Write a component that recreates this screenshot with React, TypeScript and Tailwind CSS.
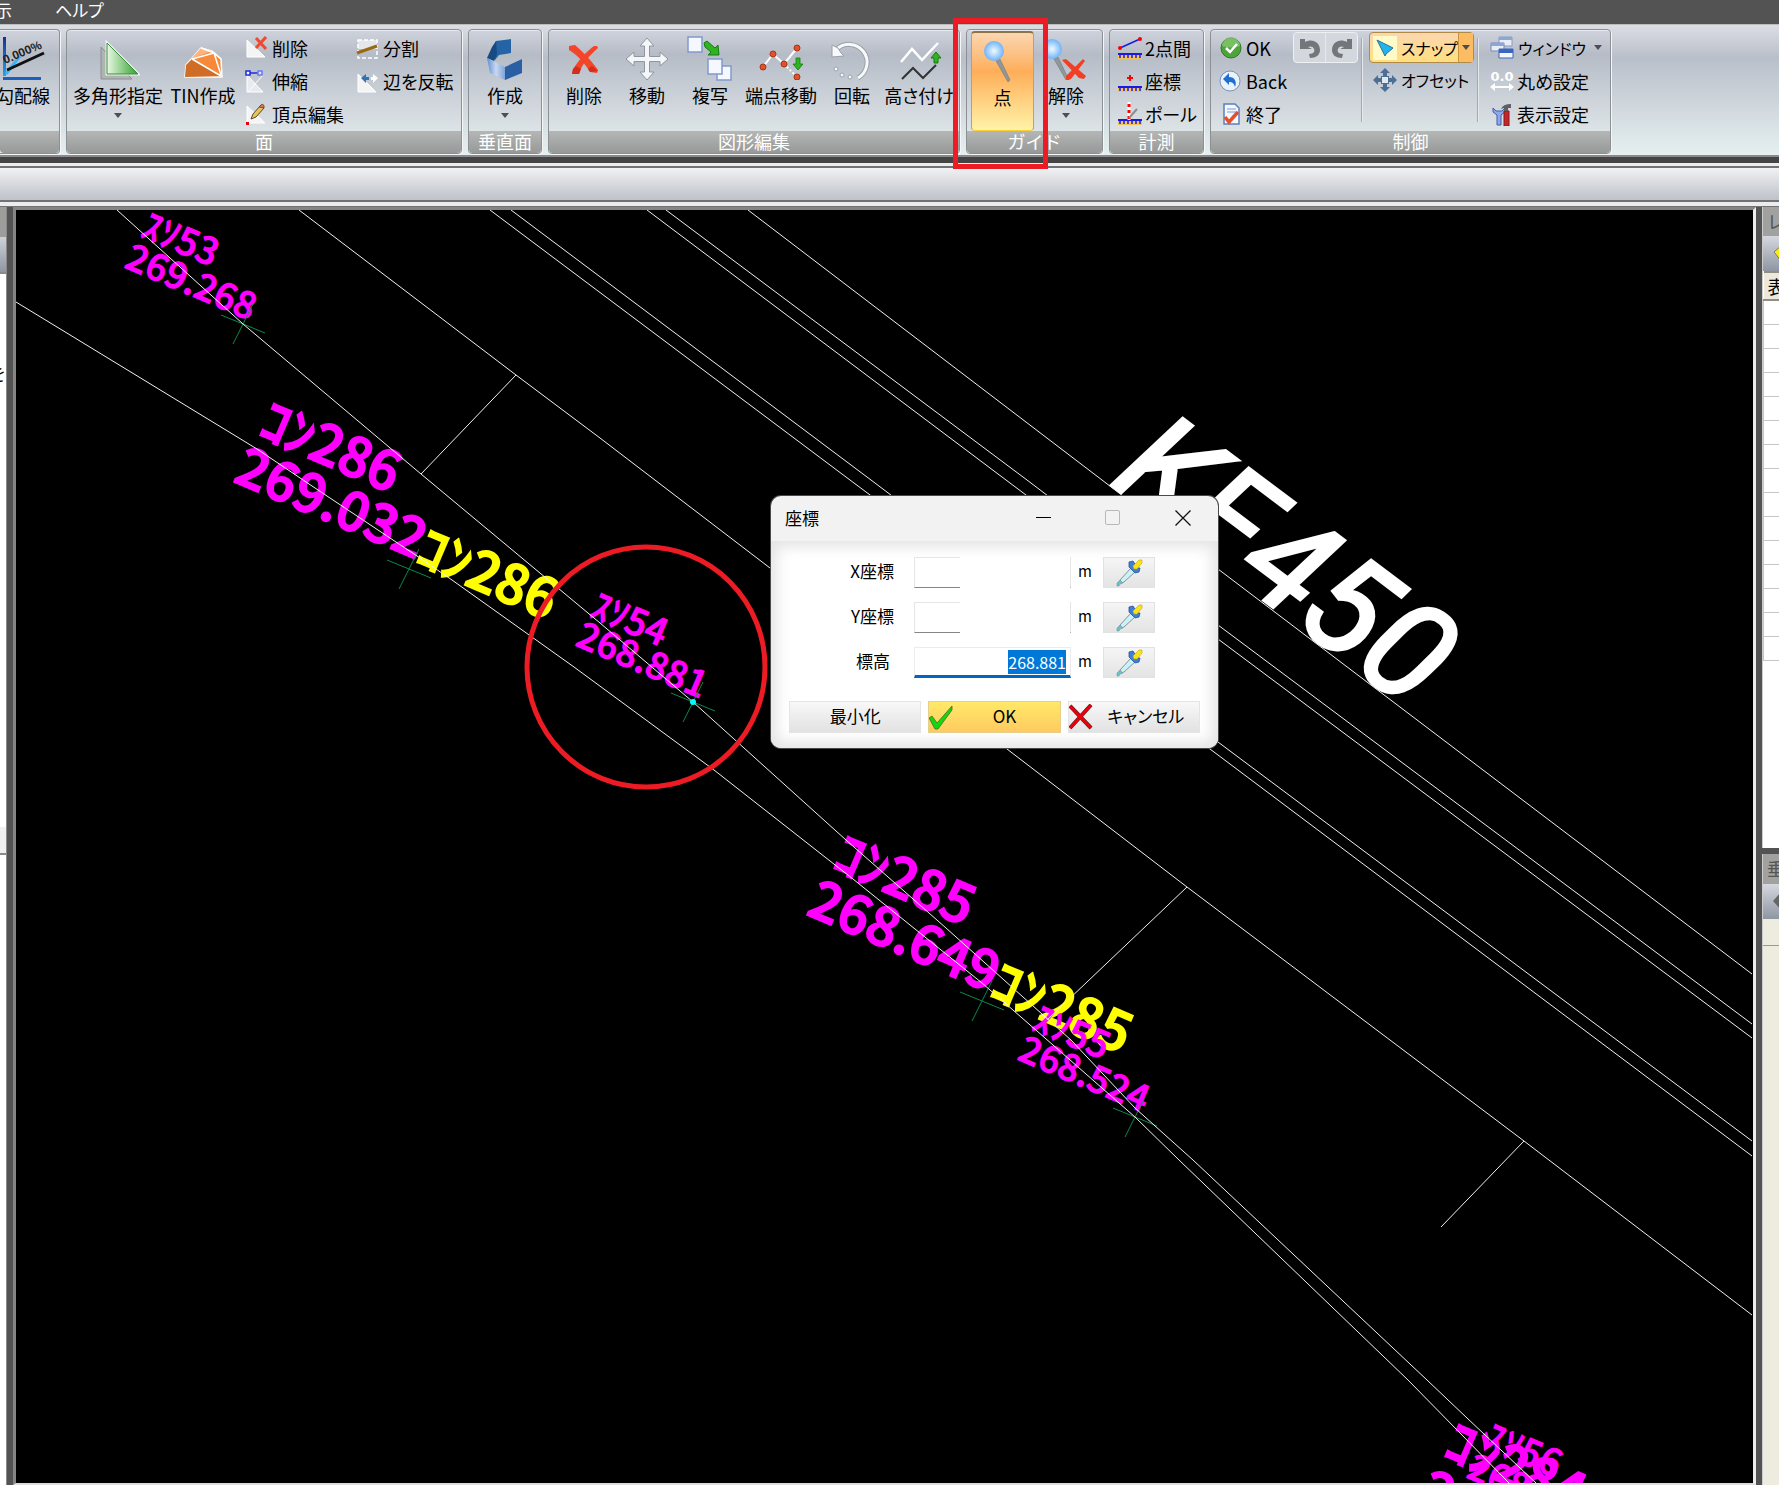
import { useEffect, useRef } from "react";
import type { ReactNode } from "react";

/* ---------- 大アイコン (44x44) ---------- */

const SlopeIcon = () => (
  <svg width="46" height="44" viewBox="0 0 46 44">
    <defs>
      <linearGradient id="axis" x1="0" y1="0" x2="0" y2="1">
        <stop offset="0" stopColor="#1b2f8f" />
        <stop offset="1" stopColor="#1fa3ee" />
      </linearGradient>
    </defs>
    <path d="M3 1h3v39H3z" fill="url(#axis)" />
    <path d="M3 41h38v3H3z" fill="#1d5fc0" />
    <path d="M6 38L20 20" stroke="#38b6f5" strokeWidth="3" />
    <path d="M7 34L44 17" stroke="#111" strokeWidth="3" />
    <text x="5" y="28" fontSize="12" fontWeight="bold" fill="#222" transform="rotate(-23 5 28)" fontFamily="Liberation Sans, sans-serif">0.000%</text>
  </svg>
);

const PolygonIcon = () => (
  <svg width="44" height="44" viewBox="0 0 44 44">
    <defs>
      <linearGradient id="tri" x1="0" y1="0" x2="1" y2="0">
        <stop offset="0" stopColor="#e9f8e4" />
        <stop offset="1" stopColor="#2fa32b" />
      </linearGradient>
    </defs>
    <path d="M5 11L36 43H5z" fill="#b0b3b3" stroke="#8b8f8f" />
    <path d="M11 7L42 38H11z" fill="url(#tri)" stroke="#eef6ee" strokeWidth="3" />
    <path d="M11 7L42 38H11z" fill="url(#tri)" stroke="#3d8a3a" strokeWidth="1" />
  </svg>
);

const TinIcon = () => (
  <svg width="44" height="44" viewBox="0 0 44 44">
    <path d="M4 41L5 29L20 12L31 15L40 23L41 41z" fill="#f6893a" stroke="#fff" strokeWidth="1.500" strokeLinejoin="round" />
    <path d="M4 41L5 29L11 23L40 40z" fill="#cf6c25" />
    <path d="M10 23L20 12L31 15z" fill="#ffb27a" />
    <path d="M11 23L40 40M11 23L33 17L40 39M20 12L33 17L40 23" fill="none" stroke="#fff" strokeWidth="1.500" />
  </svg>
);

const PlaneIcon = () => (
  <svg width="44" height="44" viewBox="0 0 44 44">
    <defs>
      <linearGradient id="pl" x1="0" y1="0" x2="1" y2="0">
        <stop offset="0" stopColor="#5f8fd0" />
        <stop offset="0.500" stopColor="#c8d8f2" />
        <stop offset="1" stopColor="#7fa3d8" />
      </linearGradient>
    </defs>
    <path d="M13 5L28 3V17L16 19L12 24L9 22z" fill="#2463a5" />
    <path d="M13 5L9 11L4 22L11 25L14 18z" fill="#174a80" />
    <path d="M4 22L22 31V44L7 37z" fill="url(#pl)" />
    <path d="M22 31L39 23V37L22 44z" fill="#2a60a3" />
  </svg>
);

const DeleteIcon = () => (
  <svg width="44" height="44" viewBox="0 0 44 44">
    <path d="M7 10L13 9C20 15 29 24 36 34L35 37L28 36C22 26 14 18 7 14z" fill="#f2452a" />
    <path d="M35 10L36 12C27 20 20 28 17 38L10 38L11 33C17 24 25 15 32 10z" fill="#f2452a" />
    <path d="M10 38L11 33L14 30L19 33L17 38zM28 36L26 33L30 30L36 35z" fill="#d32e1a" />
  </svg>
);

const MoveIcon = () => (
  <svg width="44" height="44" viewBox="0 0 44 44">
    <path
      d="M22 2L29 10H24.500V20.500H35V16L43 23L35 30V25.500H24.500V36H29L22 44L15 36H19.500V25.500H9V30L1 23L9 16V20.500H19.500V10H15z"
      fill="#f4f6f9" stroke="#8e969e" strokeWidth="1"
    />
  </svg>
);

const CopyIcon = () => (
  <svg width="46" height="46" viewBox="0 0 46 46">
    <path d="M30 31h14v14H30z" fill="#f5f8ff" stroke="#8199cc" strokeWidth="1.500" />
    <path d="M1 2h14v15H1z" fill="#f5f8ff" stroke="#8199cc" strokeWidth="1.500" />
    <path d="M21 24h14v15H21z" fill="#f5f8ff" stroke="#8199cc" strokeWidth="1.500" />
    <path d="M17 8L20 6L28 13L31 10L32 20L21 20L24 17L18 12z" fill="#2eb321" stroke="#167a10" />
  </svg>
);

const EndMoveIcon = () => (
  <svg width="44" height="44" viewBox="0 0 44 44">
    <path d="M4 31L14 18L25 28L38 12" fill="none" stroke="#fff" strokeWidth="2" />
    <path d="M25 28L38 41" stroke="#fff" strokeWidth="2" strokeDasharray="2 2" />
    {[[4, 31], [14, 18], [25, 28], [38, 12], [38, 41]].map(([x, y]) => (
      <circle key={`${x}-${y}`} cx={x} cy={y} r="3" fill="#e2512c" stroke="#a63417" />
    ))}
    <path d="M38 22h3v6h3l-5 6l-5-6h3v-6z" fill="#2eb321" stroke="#167a10" strokeWidth="0.800" />
  </svg>
);

const RotateIcon = () => (
  <svg width="44" height="44" viewBox="0 0 44 44">
    <path d="M6 14A18 18 0 1 1 28 42" fill="none" stroke="#9aa1a8" strokeWidth="5" />
    <path d="M6 14A18 18 0 1 1 28 42" fill="none" stroke="#f7f9fb" strokeWidth="3" />
    <path d="M2 9L2 21L14 20L11 17L8 12z" fill="#f7f9fb" stroke="#9aa1a8" />
    <circle cx="6" cy="33" r="2" fill="#f7f9fb" stroke="#9aa1a8" />
    <circle cx="12" cy="39" r="2" fill="#f7f9fb" stroke="#9aa1a8" />
    <circle cx="20" cy="41" r="2" fill="#f7f9fb" stroke="#9aa1a8" />
  </svg>
);

const HeightIcon = () => (
  <svg width="44" height="44" viewBox="0 0 44 44">
    <path d="M4 26L15 13L25 24L41 7" fill="none" stroke="#fff" strokeWidth="2.500" />
    <path d="M5 43L16 32L26 42L39 29" fill="none" stroke="#333" strokeWidth="2" />
    <path d="M39 16l5 6h-3v5h-4v-5h-3z" fill="#2eb321" stroke="#167a10" />
  </svg>
);

const PinHead = ({ id }: { id: string }) => (
  <>
    <defs>
      <radialGradient id={id}>
        <stop offset="0" stopColor="#f2faff" />
        <stop offset="1" stopColor="#6db4fb" />
      </radialGradient>
    </defs>
    <path d="M15 23L19 21L29 42L27 44z" fill="#8f979b" stroke="#6b7275" strokeWidth="0.500" />
    <circle cx="13" cy="13" r="10" fill={`url(#${id})`} />
  </>
);

const PinIcon = () => (
  <svg width="44" height="44" viewBox="0 0 44 44">
    <PinHead id="pinA" />
  </svg>
);

const ReleaseIcon = () => (
  <svg width="44" height="44" viewBox="0 0 44 44">
    <g transform="translate(-5 0)"><PinHead id="pinB" /></g>
    <path d="M18 24L22 23L42 40L40 43L35 42z" fill="#ef4026" />
    <path d="M39 23L41 25L27 43L22 45L22 40z" fill="#ef4026" />
  </svg>
);

/* ---------- 小アイコン (24x24) ---------- */

const Small = ({ children }: { children: ReactNode }) => (
  <svg width="24" height="24" viewBox="0 0 24 24" className="shrink-0">{children}</svg>
);

const faceDelete = (
  <Small>
    <path d="M2 4V21H20z" fill="#f4f4f4" stroke="#fff" />
    <path d="M11 2L21 13M21 1L11 12" stroke="#ef4a30" strokeWidth="3" />
  </Small>
);
const faceStretch = (
  <Small>
    <path d="M2 6L18 23H2z" fill="#e8eaee" stroke="#fff" />
    <path d="M18 6L3 23" stroke="#fff" />
    <path d="M4 4H15" stroke="#1b2be0" strokeWidth="1.500" />
    <path d="M1 2h4v4H1z" fill="#fff" stroke="#1b2be0" strokeWidth="1.500" />
    <path d="M13 2h4v4h-4z" fill="#dfe4ff" stroke="#6b78ee" strokeWidth="1.500" />
  </Small>
);
const faceVertex = (
  <Small>
    <path d="M2 4V21H20z" fill="#f4f4f4" stroke="#fff" />
    <path d="M6 17L8 12L16 3L19 6L11 15z" fill="#e8c25a" stroke="#5a4a2a" />
    <path d="M14 5L17 2Q20 3 19 6z" fill="#d8705a" stroke="#5a4a2a" strokeWidth="0.800" />
    <path d="M1 20h3v3H1z" fill="#e60012" />
  </Small>
);
const faceSplit = (
  <Small>
    <path d="M2 4h19v9H2z" fill="#e4e6ea" />
    <path d="M2 4h19v18H2z" fill="none" stroke="#fff" strokeDasharray="4 2" strokeWidth="1.500" />
    <path d="M1 17L21 10" stroke="#9a6a12" strokeWidth="3" />
  </Small>
);
const faceFlip = (
  <Small>
    <path d="M2 5V23H20z" fill="#f4f4f4" stroke="#fff" />
    <path d="M5 9L10 5V8H13V11H10V14z" fill="#2f75b5" />
    <path d="M22 9L17 5V8H15V11H17V14z" fill="#fff" />
  </Small>
);

const Ruler = () => (
  <>
    <path d="M0 18h24v5H0z" fill="#f3c35c" />
    <path d="M0 18h24" stroke="#1b1be0" strokeWidth="2" />
    <path d="M2 18v4M6 18v4M10 18v4M14 18v4M18 18v4M22 18v4" stroke="#1b1be0" strokeWidth="1.500" />
  </>
);
const twoPoint = (
  <Small>
    <Ruler />
    <path d="M2 12L22 3" stroke="#1b1be0" strokeWidth="1.500" />
    <circle cx="2" cy="12" r="2" fill="#f00" />
    <circle cx="22" cy="3" r="2" fill="#f00" />
  </Small>
);
const coordPoint = (
  <Small>
    <Ruler />
    <path d="M11 6h2v2h2v2h-2v2h-2v-2h-2v-2h2z" fill="#f00" />
  </Small>
);
const pole = (
  <Small>
    <Ruler />
    <path d="M11 0V18" stroke="#fff" strokeWidth="3" />
    <path d="M11 2V18" stroke="#f00" strokeWidth="3" strokeDasharray="3 3" />
    <path d="M11 16L19 7" stroke="#8c8f8c" strokeWidth="2" />
  </Small>
);

const okIcon = (
  <Small>
    <circle cx="12" cy="12" r="10" fill="#4fa33b" stroke="#2f7a22" />
    <path d="M3 10A9 9 0 0 1 21 10Q12 13 3 10z" fill="#8bcb78" opacity="0.700" />
    <path d="M7 12L11 16L18 8" fill="none" stroke="#fff" strokeWidth="2.500" />
  </Small>
);
const backIcon = (
  <Small>
    <circle cx="11" cy="12" r="10" fill="#e9f1fb" stroke="#7c93b5" />
    <path d="M4 10L10 4V8C16 8 18 13 16 18C15 14 13 13 10 13V16z" fill="#1f6fd0" />
  </Small>
);
const exitIcon = (
  <Small>
    <path d="M5 2h11l4 4v16H5z" fill="#f4f8ff" stroke="#5a7fc0" strokeWidth="1.500" />
    <path d="M8 7h9M8 10h9" stroke="#7f9bd0" />
    <path d="M6 15L10 20L19 10" fill="none" stroke="#e2512c" strokeWidth="3.500" />
  </Small>
);
const snapIcon = (
  <Small>
    <path d="M0 0h24v24H0z" fill="#fffbc9" />
    <path d="M4 4L20 12L13 18L12 20z" fill="#1fb6ee" stroke="#2c6f95" />
  </Small>
);
const offsetIcon = (
  <Small>
    <path
      d="M12 0L17 5H14V8H16V10H19V7L24 12L19 17V14H16V16H14V19H17L12 24L7 19H10V16H8V14H5V17L0 12L5 7V10H8V8H10V5H7z"
      fill="#4d6f96"
    />
    <path d="M9 9h6v6H9z" fill="#e3e8ee" />
  </Small>
);
const windowIcon = (
  <Small>
    <path d="M9 1h13v9H9z" fill="#e7ecf5" stroke="#8a9cc0" />
    <path d="M1 7h13v8H1z" fill="#e7ecf5" stroke="#6f88bb" />
    <path d="M1 7h13v3H1zM9 1h13v3H9z" fill="#8ea6d4" />
    <path d="M9 13h14v9H9z" fill="#f2f6fd" stroke="#3a66c0" />
    <path d="M9 13h14v4H9z" fill="#3a66c0" />
  </Small>
);
const roundIcon = (
  <Small>
    <text x="12" y="12" fontSize="13" fontWeight="bold" textAnchor="middle" fill="#fff" fontFamily="DejaVu Sans, sans-serif">0.0</text>
    <path d="M0 18L5 14V17H19V14L24 18L19 22V19H5V22z" fill="#fff" />
  </Small>
);
const displayIcon = (
  <Small>
    <path d="M3 6V10L7 13V23H11V13L15 10V6L12 9H6z" fill="#8fa9e8" stroke="#3f5fb0" />
    <path d="M14 9h5v15h-5z" fill="#c3272b" stroke="#8e1518" />
    <path d="M11 7Q13 2 21 2V6H18V9H14V6z" fill="#5b6166" />
  </Small>
);

const Arrow = () => (
  <svg width="8" height="5" viewBox="0 0 8 5" className="shrink-0"><path d="M0 0h8L4 5z" fill="#4b4f55" /></svg>
);

/* ---------- リボン部品 ---------- */

function Group({ title, className, children }: { title: string; className: string; children: ReactNode }) {
  return (
    <section
      className={`relative flex h-[125px] shrink-0 flex-col rounded border border-[#8c9094] bg-linear-to-b from-[#cfd3dc] via-[#b6bcc7] via-20% to-[#e8efef] shadow-[1px_1px_0_#f4f6f8,inset_0_1px_0_#e6e9ee] ${className}`}
    >
      <div className="flex flex-1 px-1">{children}</div>
      <h2 className="h-[22px] rounded-b bg-linear-to-b from-[#b4b7b6] to-[#969998] text-center text-[18px] leading-5 text-white">
        {title}
      </h2>
    </section>
  );
}

function BigButton({ icon, label, className, arrow, active }: { icon: ReactNode; label: string; className: string; arrow?: boolean; active?: boolean }) {
  return (
    <button
      type="button"
      className={`mt-px flex h-[100px] shrink-0 flex-col items-center rounded-sm pt-1 ${className} ${
        active
          ? "border border-t-2 border-[#c8a050] border-t-[#8b7448] border-b-[#fbd033] bg-linear-to-b from-[#fbd6b0] via-[#fdae58] via-40% to-[#fff3a8]"
          : ""
      }`}
    >
      <span className="flex h-[46px] items-center">{icon}</span>
      <span className="mt-[2px] whitespace-nowrap text-[18px] leading-6 [font-feature-settings:'palt']">{label}</span>
      {arrow && <span className="flex h-4 items-center"><Arrow /></span>}
    </button>
  );
}

function Row({ icon, label, arrow }: { icon: ReactNode; label: string; arrow?: boolean }) {
  return (
    <button type="button" className="flex h-[33px] items-center gap-[3px] whitespace-nowrap text-[18px] leading-6">
      {icon}
      <span className="[font-feature-settings:'palt']">{label}</span>
      {arrow && <span className="pl-1"><Arrow /></span>}
    </button>
  );
}

const Separator = () => <div className="mt-2 h-[84px] w-[2px] border-r border-[#e6e9ec] bg-[#a4a8b0]" />;

function Ribbon() {
  return (
    <div className="flex h-[133px] shrink-0 items-start gap-[6px] overflow-hidden border-b-2 border-t border-b-[#8a8a8a] border-t-[#bbb] bg-linear-to-b from-[#dcdee4] via-[#b9bfca] via-25% to-[#e6f0f0] pt-1">
      <Group title="" className="w-[60px] rounded-l-none border-l-0">
        <BigButton icon={<SlopeIcon />} label="勾配線" className="-ml-[9px] w-[56px]" />
      </Group>
      <Group title="面" className="w-[396px]">
        <BigButton icon={<PolygonIcon />} label="多角形指定" className="w-[94px]" arrow />
        <BigButton icon={<TinIcon />} label="TIN作成" className="w-[76px]" />
        <div className="flex w-[112px] flex-col pl-1 pt-px">
          <Row icon={faceDelete} label="削除" />
          <Row icon={faceStretch} label="伸縮" />
          <Row icon={faceVertex} label="頂点編集" />
        </div>
        <div className="flex flex-col pl-[3px] pt-px">
          <Row icon={faceSplit} label="分割" />
          <Row icon={faceFlip} label="辺を反転" />
        </div>
      </Group>
      <Group title="垂直面" className="w-[74px]">
        <BigButton icon={<PlaneIcon />} label="作成" className="w-[64px]" arrow />
      </Group>
      <Group title="図形編集" className="w-[412px]">
        <BigButton icon={<DeleteIcon />} label="削除" className="w-[62px]" />
        <BigButton icon={<MoveIcon />} label="移動" className="w-[64px]" />
        <BigButton icon={<CopyIcon />} label="複写" className="w-[62px]" />
        <BigButton icon={<EndMoveIcon />} label="端点移動" className="w-[80px]" />
        <BigButton icon={<RotateIcon />} label="回転" className="w-[62px]" />
        <BigButton icon={<HeightIcon />} label="高さ付け" className="w-[72px]" />
      </Group>
      <Group title="ガイド" className="w-[137px]">
        <BigButton icon={<PinIcon />} label="点" className="w-[63px]" active />
        <BigButton icon={<ReleaseIcon />} label="解除" className="w-[64px]" arrow />
      </Group>
      <Group title="計測" className="w-[95px]">
        <div className="flex flex-col pl-1 pt-px">
          <Row icon={twoPoint} label="2点間" />
          <Row icon={coordPoint} label="座標" />
          <Row icon={pole} label="ポール" />
        </div>
      </Group>
      <Group title="制御" className="w-[401px]">
        <div className="flex w-[78px] flex-col pl-1 pt-px">
          <Row icon={okIcon} label="OK" />
          <Row icon={backIcon} label="Back" />
          <Row icon={exitIcon} label="終了" />
        </div>
        <div className="mr-[3px] mt-[2px] flex h-[31px] w-[65px] rounded border border-[#eef0f2] bg-[#d3d8de]">
          <button type="button" aria-label="元に戻す" className="flex flex-1 items-center justify-center border-r border-[#e6e9ed]">
            <svg width="22" height="22" viewBox="0 0 22 22"><path d="M1 2H6V5C13 1 21 5 21 13C21 18 17 21 11 21L10 17C15 17 16 14 15 12C14 9 11 9 9 10L13 12H1z" fill="#73777a" /></svg>
          </button>
          <button type="button" aria-label="やり直す" className="flex flex-1 items-center justify-center">
            <svg width="22" height="22" viewBox="0 0 22 22"><path d="M21 2H16V5C9 1 1 5 1 13C1 18 5 21 11 21L12 17C7 17 6 14 7 12C8 9 11 9 13 10L9 12H21z" fill="#73777a" /></svg>
          </button>
        </div>
        <Separator />
        <div className="flex w-[114px] flex-col pl-[6px]">
          <div className="mt-[2px] flex h-[31px] w-[105px] items-center rounded-sm border border-[#b08a48] bg-linear-to-b from-[#fbd6ae] to-[#ffdf7e]">
            <button type="button" className="flex flex-1 items-center gap-1 pl-[3px] text-[16px]">
              {snapIcon}
              <span className="whitespace-nowrap [font-feature-settings:'palt']">スナップ</span>
            </button>
            <button type="button" aria-label="スナップの種類" className="flex h-full w-[18px] items-center justify-center border-l border-[#c8953c] bg-[#fdbb62]"><Arrow /></button>
          </div>
          <button type="button" className="flex h-[33px] items-center gap-1 whitespace-nowrap pl-1 text-[16px] [font-feature-settings:'palt']">
            {offsetIcon}オフセット
          </button>
        </div>
        <Separator />
        <div className="flex flex-col pl-[11px] pt-px">
          <button type="button" className="flex h-[33px] items-center gap-1 whitespace-nowrap text-[16px] [font-feature-settings:'palt']">
            {windowIcon}ウィンドウ<span className="pl-1"><Arrow /></span>
          </button>
          <Row icon={roundIcon} label="丸め設定" />
          <Row icon={displayIcon} label="表示設定" />
        </div>
      </Group>
    </div>
  );
}

/* ---------- 図面 ---------- */

const polylines = [
  "101,0 227,114 405,264 584,413 677,492 830,630 930,718 1055,830 1119,898 1177,950 1411,1170 1451,1208 1520,1273",
  "0,92 241,239 302,280 401,346 436,370 558,457 698,560 837,669 966,773 1029,828 1119,907 1163,950 1392,1170 1493,1273",
  "283,0 500,165 584,228 754,358 991,539 1171,677 1508,931 1736,1105",
  "500,165 405,264",
  "1171,677 1031,810",
  "1508,931 1425,1017",
  "474,0 834,270 1202,545 1736,946",
  "495,0 855,270 1202,532 1736,931",
  "631,0 990,270 1202,429 1736,828",
  "650,0 1011,270 1202,415 1736,814",
  "732,0 1086,270 1202,359 1736,764",
];

const crosses = [[227, 114], [393, 359], [677, 492], [966, 791], [1119, 907]];

// [x, y, 文字, 大きさ, 色]
const labels: [number, number, string, "L" | "S", string][] = [
  [123, 26, "ｽｿ53", "S", "#ff00ff"],
  [107, 57, "269.268", "S", "#ff00ff"],
  [240, 226, "ｺﾝ286", "L", "#ff00ff"],
  [216, 271, "269.032", "L", "#ff00ff"],
  [397, 353, "ｺﾝ286", "L", "#ffff00"],
  [572, 406, "ｽｿ54", "S", "#ff00ff"],
  [558, 435, "268.881", "S", "#ff00ff"],
  [814, 659, "ｺﾝ285", "L", "#ff00ff"],
  [789, 704, "268.649", "L", "#ff00ff"],
  [971, 787, "ｺﾝ285", "L", "#ffff00"],
  [1014, 819, "ｽｿ55", "S", "#ff00ff"],
  [1000, 849, "268.524", "S", "#ff00ff"],
  [1425, 1247, "ｺﾝ284", "L", "#ff00ff"],
  [1401, 1294, "268", "L", "#ff00ff"],
  [1466, 1237, "ｽｿ56", "S", "#ff00ff"],
  [1449, 1267, "268", "S", "#ff00ff"],
];

function Drawing() {
  return (
    <svg className="absolute inset-0 h-full w-full" fontFamily="'Noto Sans CJK JP', sans-serif">
      {labels.map(([x, y, text, size, color]) => (
        <text
          key={`${x}-${y}`}
          x={x}
          y={y}
          fontSize={size === "L" ? 54 : 37}
          fontWeight="500"
          fill={color}
          stroke={color}
          strokeWidth={size === "L" ? 2 : 1}
          transform={`rotate(23 ${x} ${y})`}
        >
          {text}
        </text>
      ))}
      <text x="1092" y="273" fontSize="136" fontStyle="italic" fill="#fff" stroke="#fff" strokeWidth="3" fontFamily="Roboto, sans-serif" transform="rotate(37 1092 273)">KF450</text>
      {crosses.map(([x, y]) => (
        <path key={x} d={`M${x - 22} ${y - 9}L${x + 22} ${y + 9}M${x + 10} ${y - 20}L${x - 10} ${y + 20}`} stroke="#0b8a4b" />
      ))}
      {polylines.map((points) => (
        <polyline key={points} points={points} fill="none" stroke="#f0f0f0" />
      ))}
      <circle cx="677" cy="492" r="3" fill="#00ffff" />
      <ellipse cx="630" cy="457" rx="119" ry="120" fill="none" stroke="#ed1c24" strokeWidth="5" />
    </svg>
  );
}

/* ---------- 座標ダイアログ ---------- */

const Dropper = () => (
  <svg width="28" height="28" viewBox="0 0 28 28">
    <path d="M5 21L16 9L20 13L9 23L6 24z" fill="#c9f1f6" stroke="#8a9298" />
    <path d="M2 27V24L5 21L8 24L5 25L4 27z" fill="#5cc6cc" stroke="#8a9298" strokeWidth="0.600" />
    <path d="M14 3L18 2L20 5L23 9L25 9L24 13L20 14L17 11L14 8z" fill="#3f7fd6" stroke="#2a5298" strokeWidth="0.800" />
    <path d="M18 7L24 1L27 1V4L22 10L19 10z" fill="#f7e21c" stroke="#c2a90c" strokeWidth="0.600" />
  </svg>
);

const fields = [
  { id: "x", label: "X座標" },
  { id: "y", label: "Y座標" },
  { id: "z", label: "標高" },
];

function CoordinateDialog() {
  const heightRef = useRef<HTMLInputElement>(null);

  // 標高欄を選択状態で開く
  useEffect(() => {
    heightRef.current?.focus();
    heightRef.current?.select();
  }, []);

  return (
    <div role="dialog" aria-label="座標" className="absolute left-[755px] top-[286px] w-[447px] overflow-hidden rounded-[10px] bg-[#f2f2f2] shadow-[0_0_0_1px_#4a4a4a]">
      <div className="flex h-[45px] items-center pb-[2px] pl-[14px] text-[17px]">
        <span className="flex-1">座標</span>
        <button type="button" aria-label="最小化する" className="flex h-full w-[68px] items-center justify-center"><span className="h-px w-[15px] bg-black" /></button>
        <button type="button" aria-label="最大化" disabled className="flex h-full w-[70px] items-center justify-center"><span className="h-[15px] w-[15px] rounded-xs border border-[#b8b8b8]" /></button>
        <button type="button" aria-label="閉じる" className="flex h-full w-[71px] items-center justify-center">
          <svg width="16" height="16" viewBox="0 0 16 16"><path d="M0.500 0.500L15.500 15.500M15.500 0.500L0.500 15.500" stroke="#111" strokeWidth="1.300" /></svg>
        </button>
      </div>
      <form className="bg-white px-[18px] pb-[15px] pt-4 shadow-[inset_0_0_14px_6px_#e4e4e4]">
        {fields.map(({ id, label }) => (
          <div key={id} className="flex h-[45px] items-start">
            <label htmlFor={id} className="flex h-[28px] w-[125px] items-center justify-end pr-[20px] text-[17px]">
              <span className={id === "z" ? "pr-1" : ""}>{label}</span>
            </label>
            <div className="relative h-[31px] w-[157px]">
              <input
                id={id}
                ref={id === "z" ? heightRef : undefined}
                defaultValue={id === "z" ? "268.881" : ""}
                className={`h-full w-full border bg-white px-1 text-right text-[16px] leading-[18px] outline-none selection:bg-[#0078d7] selection:text-white ${
                  id === "z" ? "border-[#ececec] border-b-[3px] border-b-[#0067c0]" : "border-[#e6e6e6] border-b-[#868686]"
                }`}
              />
              {id !== "z" && <span className="absolute -top-px bottom-[-1px] left-[46px] right-px bg-white" />}
            </div>
            <span className="flex h-[29px] w-[28px] items-center justify-center text-[15px]">m</span>
            <button type="button" aria-label={`${label}を取得`} className="ml-1 flex h-[31px] w-[52px] items-center justify-center border border-[#e2e2e2] bg-linear-to-b from-[#f5f5f5] to-[#e4e4e4]">
              <Dropper />
            </button>
          </div>
        ))}
        <div className="mt-[9px] flex gap-[7px] text-[17px] leading-6">
          <button type="button" className="h-[32px] flex-1 border border-[#e4e4e4] bg-linear-to-b from-[#f8f8f8] to-[#e2e2e2] pb-[2px]">最小化</button>
          <button type="button" className="flex h-[32px] flex-1 items-center border border-[#e4d08a] bg-linear-to-b from-[#ffe968] to-[#ffca60]">
            <svg width="24" height="26" viewBox="0 0 24 26"><path d="M0 14L3 12L8 19L23 2V6L9 25L6 25z" fill="#13d80f" stroke="#4c6b2a" strokeWidth="0.800" /></svg>
            <span className="flex-1 pb-[2px] pr-1 text-center">OK</span>
          </button>
          <button type="button" className="flex h-[32px] flex-1 items-center border border-[#e4e4e4] bg-linear-to-b from-[#f8f8f8] to-[#e2e2e2]">
            <svg width="24" height="26" viewBox="0 0 24 26"><path d="M1 2L22 24M22 1L1 24" stroke="#5a2020" strokeWidth="4" /><path d="M1 2L22 24M22 1L1 24" stroke="#e8000b" strokeWidth="3" /></svg>
            <span className="flex-1 whitespace-nowrap pb-[2px] text-center [font-feature-settings:'palt']">キャンセル</span>
          </button>
        </div>
      </form>
    </div>
  );
}

/* ---------- 左右のパネル ---------- */

function LeftPanel() {
  return (
    <aside className="flex w-[7px] shrink-0 flex-col overflow-hidden border-r border-[#8a8a8a] bg-white">
      <div className="h-[30px] bg-[#9d9e9c]" />
      <div className="h-[35px] bg-linear-to-b from-[#ced2d8] to-[#8f96a3]" />
      <div className="flex h-[555px] justify-end border-t-2 border-[#8a8a8a] pt-[86px] text-[18px]">
        <span>を</span>
      </div>
      <div className="h-[26px] bg-[#f0f0f0]" />
      <div className="flex-1 border-t-2 border-[#8a8a8a]" />
    </aside>
  );
}

function RightPanel() {
  return (
    <aside className="flex w-[17px] shrink-0 flex-col overflow-hidden">
      <div className="flex h-[641px] flex-col border-l border-[#ccc] bg-white">
        <h3 className="h-[29px] shrink-0 bg-[#a1a19f] pl-1 text-[18px] leading-[28px] text-[#555]">レ</h3>
        <div className="flex h-[35px] shrink-0 items-center bg-linear-to-b from-[#d5d8de] to-[#8f96a3] pl-[11px]">
          <svg width="20" height="20" viewBox="0 0 20 20" className="shrink-0"><path d="M0 8L8 1L16 8L8 18z" fill="#ffee00" stroke="#777" /><circle cx="7" cy="8" r="2" fill="#d00" /></svg>
        </div>
        <table className="w-full border-collapse">
          <thead>
            <tr><th scope="col" className="h-[28px] border-b-2 border-t-2 border-[#908d82] bg-[#ece9dc] py-0 pl-1 text-left text-[18px] font-normal leading-[22px]"><span className="block w-3 overflow-hidden">表</span></th></tr>
          </thead>
          <tbody>
            {Array.from({ length: 15 }, (_, i) => (
              <tr key={i}><td className="h-6 border-b border-l border-[#c6c6c6] p-0" /></tr>
            ))}
          </tbody>
        </table>
      </div>
      <div className="h-[6px] shrink-0 bg-[#535353]" />
      <div className="flex flex-1 flex-col border-l border-[#ccc] bg-[#eeebdf]">
        <h3 className="h-[30px] bg-[#a1a19f] pl-1 text-[18px] leading-[28px] text-[#555]">垂</h3>
        <div className="flex h-[35px] items-center bg-linear-to-b from-[#d5d8de] to-[#8f96a3] pl-[10px]">
          <svg width="20" height="20" viewBox="0 0 20 20" className="shrink-0"><path d="M0 9L8 0L16 9L8 18z" fill="#666" /></svg>
        </div>
        <div className="h-[27px] border-b border-[#9c9a90]" />
      </div>
    </aside>
  );
}

export default function App() {
  return (
    <div className="relative flex h-screen flex-col overflow-hidden bg-[#535353] font-['Noto_Sans_CJK_JP',sans-serif] text-black">
      <nav className="flex h-6 shrink-0 items-start text-[17px] leading-5 text-white">
        <a href="#view" className="-ml-[5px] w-[60px]">示</a>
        <a href="#help" className="[font-feature-settings:'palt']">ヘルプ</a>
      </nav>
      <Ribbon />
      <div className="h-[6px] shrink-0 bg-[#444]" />
      <div className="h-[5px] shrink-0 border-b-2 border-[#707276] bg-[#ececec]" />
      <div className="h-[34px] shrink-0 border-b-2 border-[#707276] bg-linear-to-b from-[#f0f1f3] to-[#bec2c9]" />
      <div className="h-1 shrink-0 bg-[#ececec]" />
      <div className="flex min-h-0 flex-1 gap-[6px] border-t border-[#707276]">
        <LeftPanel />
        <main className="relative flex-1 overflow-hidden border-b-2 border-l-[3px] border-r-[3px] border-t-[3px] border-[#858585] border-b-[#ddd] border-r-[#eee] bg-black">
          <Drawing />
          <CoordinateDialog />
        </main>
        <RightPanel />
      </div>
      {/* 注目箇所の赤枠 */}
      <div className="pointer-events-none absolute left-[953px] top-[18px] h-[151px] w-[95px] border-[5px] border-[#ed1c24]" />
    </div>
  );
}
